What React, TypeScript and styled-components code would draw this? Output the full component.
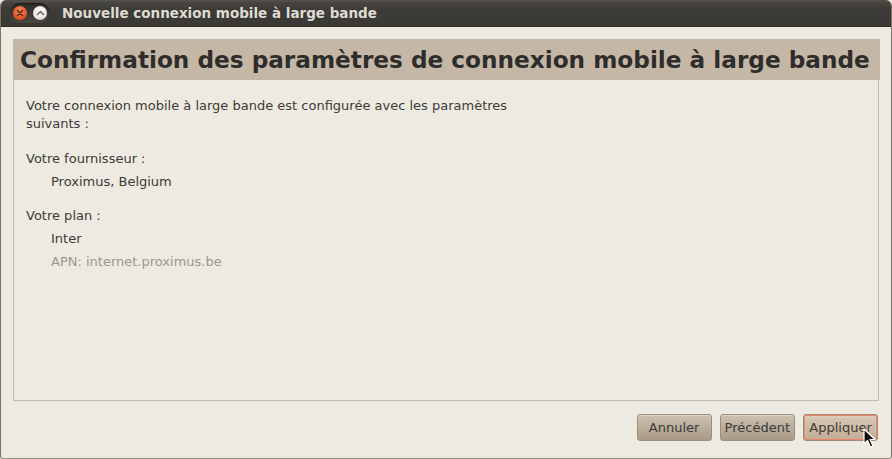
import React from "react";
import styled, { createGlobalStyle } from "styled-components";

const Global = createGlobalStyle`
  html, body { margin: 0; padding: 0; background: #edeae2; }
  body { font-family: "DejaVu Sans", sans-serif; }
`;

const Window = styled.div`
  position: relative;
  width: 892px;
  height: 459px;
  box-sizing: border-box;
  display: flex;
  flex-direction: column;
  background: #edeae2;
  border-left: 1px solid #7e7362;
  border-right: 1px solid #7e7362;
  border-bottom: 1px solid #9a8e7c;
  border-radius: 6px 6px 3px 3px;
  overflow: hidden;
`;

const TitleBar = styled.div`
  height: 27px;
  flex: none;
  display: flex;
  align-items: center;
  background: linear-gradient(#56524a 0px, #46443e 3px, #3c3b37 10px, #3a3935 100%);
  border-bottom: 1px solid #2f2e2a;
  box-sizing: border-box;
  padding-left: 9px;
`;

const ButtonWell = styled.div`
  display: flex;
  align-items: center;
  gap: 6px;
  padding: 3px 3px;
  border-radius: 11px;
  background: linear-gradient(#2e2d2a, #4a4843);
  box-shadow: inset 0 1px 1px rgba(0,0,0,0.5);
`;

const WinBtn = styled.div<{ $kind: "close" | "min" }>`
  width: 14px;
  height: 14px;
  border-radius: 50%;
  display: flex;
  align-items: center;
  justify-content: center;
  background: ${(p) =>
    p.$kind === "close"
      ? "radial-gradient(circle at 50% 35%, #f7875a, #e2501f 70%, #b8421b)"
      : "radial-gradient(circle at 50% 35%, #ffffff, #e9e6e0 60%, #bdb9b1)"};
`;

const Title = styled.div`
  margin-left: 12px;
  color: #dfdbd2;
  font-weight: bold;
  font-size: 13.5px;
`;

const Body = styled.div`
  flex: 1;
  display: flex;
  flex-direction: column;
  padding: 12px 12px 17px 12px;
`;

const Frame = styled.div`
  flex: 1;
  display: flex;
  flex-direction: column;
  border: 1px solid #c5b9a8;
  border-top: none;
`;

const Banner = styled.div`
  height: 41px;
  background: #c4b7a6;
  margin: 0 -2px 0 -1px;
  display: flex;
  align-items: center;
  padding-left: 7px;
  color: #2e2d2b;
  font-weight: bold;
  font-size: 23.2px;
  white-space: nowrap;
`;

const Content = styled.div`
  padding: 17px 12px 0 12px;
  color: #3c3b37;
  font-size: 13px;
  line-height: 18px;
`;

const Para = styled.p`
  margin: 0 0 17px 0;
  max-width: 490px;
`;

const Label = styled.div``;

const Value = styled.div<{ $muted?: boolean }>`
  padding-left: 25px;
  margin-top: 5px;
  color: ${(p) => (p.$muted ? "#9b978f" : "#3c3b37")};
`;

const Group = styled.div`
  margin-bottom: 16px;
`;

const Actions = styled.div`
  display: flex;
  justify-content: flex-end;
  gap: 8px;
  padding-top: 13px;
  padding-right: 1px;
`;

const Btn = styled.div<{ $focus?: boolean }>`
  min-width: 75px;
  height: 27px;
  box-sizing: border-box;
  padding: 0 4px;
  display: flex;
  align-items: center;
  justify-content: center;
  border-radius: 3px;
  font-size: 13px;
  color: #3c3b37;
  border: 1px solid ${(p) => (p.$focus ? "#9c8b76" : "#9c8e7b")};
  background: ${(p) =>
    p.$focus
      ? "linear-gradient(#d8c7b5, #c3ac96)"
      : "linear-gradient(#cdc1b0, #a89a86)"};
  box-shadow: ${(p) =>
    p.$focus
      ? "inset 0 0 0 1px #e8866a, inset 0 1px 0 2px rgba(255,255,255,0.1)"
      : "inset 0 1px 0 rgba(255,255,255,0.35)"};
`;

const Cursor = styled.svg`
  position: absolute;
  left: 862px;
  top: 428px;
`;

export default function App() {
  return (
    <>
      <Global />
      <Window>
        <TitleBar>
          <ButtonWell>
            <WinBtn $kind="close">
              <svg width="8" height="8" viewBox="0 0 8 8">
                <path d="M1.5 1.5 L6.5 6.5 M6.5 1.5 L1.5 6.5" stroke="#5a2a18" strokeWidth="1.5" strokeLinecap="round" />
              </svg>
            </WinBtn>
            <WinBtn $kind="min">
              <svg width="9" height="8" viewBox="0 0 9 8">
                <path d="M1.5 5.5 L4.5 2.5 L7.5 5.5" stroke="#6a665e" strokeWidth="1.5" fill="none" strokeLinecap="round" strokeLinejoin="round" />
              </svg>
            </WinBtn>
          </ButtonWell>
          <Title>Nouvelle connexion mobile à large bande</Title>
        </TitleBar>
        <Body>
          <Frame>
            <Banner>Confirmation des paramètres de connexion mobile à large bande</Banner>
            <Content>
              <Para>
                Votre connexion mobile à large bande est configurée avec les paramètres suivants :
              </Para>
              <Group>
                <Label>Votre fournisseur :</Label>
                <Value>Proximus, Belgium</Value>
              </Group>
              <Group>
                <Label>Votre plan :</Label>
                <Value>Inter</Value>
                <Value $muted>APN: internet.proximus.be</Value>
              </Group>
            </Content>
          </Frame>
          <Actions>
            <Btn>Annuler</Btn>
            <Btn>Précédent</Btn>
            <Btn $focus>Appliquer</Btn>
          </Actions>
        </Body>
        <Cursor width="14" height="21" viewBox="0 0 14 21">
          <path d="M1 1 L1 16 L4.5 12.5 L7.5 19 L10 18 L7 11.5 L12 11.5 Z" fill="#111" stroke="#fff" strokeWidth="1.2" strokeLinejoin="round" />
        </Cursor>
      </Window>
    </>
  );
}
